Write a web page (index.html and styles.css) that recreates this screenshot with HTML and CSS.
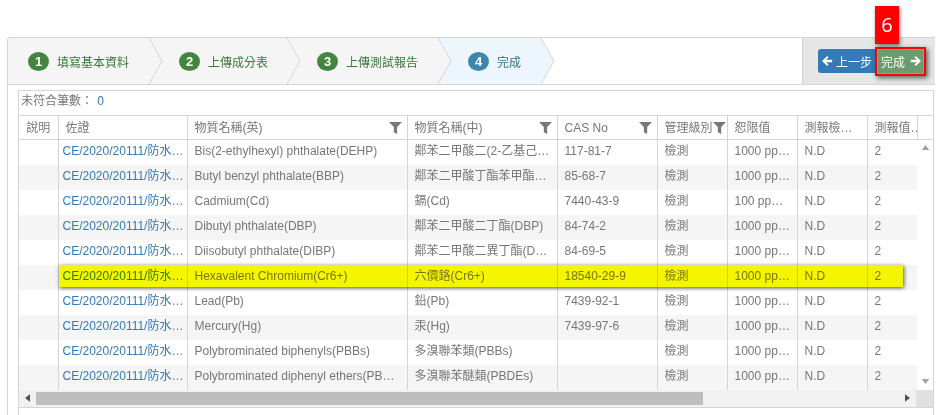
FILE: index.html
```html
<!DOCTYPE html>
<html lang="zh-Hant">
<head>
    <meta charset="UTF-8">
    <title>完成</title>
    <link rel="stylesheet" href="styles.css">
</head>
<body>
    <div class="panel">
        <div class="wizard">
            <div class="steps">
                <div class="step step-first"><span class="step-num">1</span><span class="step-text">填寫基本資料</span></div>
                <svg class="step-arrow" viewBox="0 0 14 46"><rect width="14" height="46" fill="#f5f5f5"/><path d="M0 0L13 23L0 46" fill="#f5f5f5" stroke="#d5d5d5"/></svg>
                <div class="step step-second"><span class="step-num">2</span><span class="step-text">上傳成分表</span></div>
                <svg class="step-arrow" viewBox="0 0 14 46"><rect width="14" height="46" fill="#f5f5f5"/><path d="M0 0L13 23L0 46" fill="#f5f5f5" stroke="#d5d5d5"/></svg>
                <div class="step"><span class="step-num">3</span><span class="step-text">上傳測試報告</span></div>
                <svg class="step-arrow" viewBox="0 0 14 46"><rect width="14" height="46" fill="#edf6fc"/><path d="M0 0L13 23L0 46" fill="#f5f5f5" stroke="#d5d5d5"/></svg>
                <div class="step step-current"><span class="step-num">4</span><span class="step-text">完成</span></div>
                <svg class="step-arrow" viewBox="0 0 14 46"><rect width="14" height="46" fill="#fff"/><path d="M0 0L13 23L0 46" fill="#edf6fc" stroke="#d5d5d5"/></svg>
            </div>
            <div class="actions">
                <a class="btn btn-prev">
                    <svg class="btn-icon" viewBox="0 0 12 12"><path d="M6.2 1L1 6L6.2 11L7.6 9.6L5 7.2H11.2V4.8H5L7.6 2.4Z" fill="#fff"/></svg>
                    上一步
                </a>
                <a class="btn btn-next">
                    完成
                    <svg class="btn-icon" viewBox="0 0 12 12"><path d="M5.8 1L11 6L5.8 11L4.4 9.6L7 7.2H0.8V4.8H7L4.4 2.4Z" fill="#fff"/></svg>
                </a>
                <div class="marker">6</div>
            </div>
        </div>

        <div class="grid">
            <div class="grid-summary">未符合筆數： <span class="summary-count">0</span></div>
            <div class="grid-body">
                <div class="grid-clip">
                    <table class="grid-table">
                        <colgroup>
                            <col class="col-note"><col class="col-doc"><col class="col-en"><col class="col-zh"><col class="col-cas"><col class="col-level"><col class="col-limit"><col class="col-result"><col class="col-value">
                        </colgroup>
                        <thead>
                            <tr>
                                <th class="center">說明</th>
                                <th>佐證</th>
                                <th>物質名稱(英)<svg class="filter" viewBox="0 0 14 13"><path d="M0 0H14L8.8 5.5V13L5.2 11V5.5Z"/></svg></th>
                                <th>物質名稱(中)<svg class="filter" viewBox="0 0 14 13"><path d="M0 0H14L8.8 5.5V13L5.2 11V5.5Z"/></svg></th>
                                <th>CAS No<svg class="filter" viewBox="0 0 14 13"><path d="M0 0H14L8.8 5.5V13L5.2 11V5.5Z"/></svg></th>
                                <th>管理級別<svg class="filter filter-tight" viewBox="0 0 14 13"><path d="M0 0H14L8.8 5.5V13L5.2 11V5.5Z"/></svg></th>
                                <th>恕限值</th>
                                <th>測報檢出值</th>
                                <th>測報值單位</th>
                            </tr>
                        </thead>
                        <tbody>
                            <tr><td></td><td class="doc"><a>CE/2020/20111/防水布料.pdf</a></td><td>Bis(2-ethylhexyl) phthalate(DEHP)</td><td class="zh">鄰苯二甲酸二(2-乙基己基)酯(DEHP)</td><td>117-81-7</td><td>檢測</td><td>1000 ppm(mg/kg)</td><td>N.D</td><td>2</td></tr>
                            <tr><td></td><td class="doc"><a>CE/2020/20111/防水布料.pdf</a></td><td>Butyl benzyl phthalate(BBP)</td><td class="zh">鄰苯二甲酸丁酯苯甲酯(BBP)</td><td>85-68-7</td><td>檢測</td><td>1000 ppm(mg/kg)</td><td>N.D</td><td>2</td></tr>
                            <tr><td></td><td class="doc"><a>CE/2020/20111/防水布料.pdf</a></td><td>Cadmium(Cd)</td><td class="zh">鎘(Cd)</td><td>7440-43-9</td><td>檢測</td><td>100 ppm(mg/kg)</td><td>N.D</td><td>2</td></tr>
                            <tr><td></td><td class="doc"><a>CE/2020/20111/防水布料.pdf</a></td><td>Dibutyl phthalate(DBP)</td><td class="zh">鄰苯二甲酸二丁酯(DBP)</td><td>84-74-2</td><td>檢測</td><td>1000 ppm(mg/kg)</td><td>N.D</td><td>2</td></tr>
                            <tr><td></td><td class="doc"><a>CE/2020/20111/防水布料.pdf</a></td><td>Diisobutyl phthalate(DIBP)</td><td class="zh">鄰苯二甲酸二異丁酯(DIBP)</td><td>84-69-5</td><td>檢測</td><td>1000 ppm(mg/kg)</td><td>N.D</td><td>2</td></tr>
                            <tr><td></td><td class="doc"><a>CE/2020/20111/防水布料.pdf</a></td><td>Hexavalent Chromium(Cr6+)</td><td class="zh">六價鉻(Cr6+)</td><td>18540-29-9</td><td>檢測</td><td>1000 ppm(mg/kg)</td><td>N.D</td><td>2</td></tr>
                            <tr><td></td><td class="doc"><a>CE/2020/20111/防水布料.pdf</a></td><td>Lead(Pb)</td><td class="zh">鉛(Pb)</td><td>7439-92-1</td><td>檢測</td><td>1000 ppm(mg/kg)</td><td>N.D</td><td>2</td></tr>
                            <tr><td></td><td class="doc"><a>CE/2020/20111/防水布料.pdf</a></td><td>Mercury(Hg)</td><td class="zh">汞(Hg)</td><td>7439-97-6</td><td>檢測</td><td>1000 ppm(mg/kg)</td><td>N.D</td><td>2</td></tr>
                            <tr><td></td><td class="doc"><a>CE/2020/20111/防水布料.pdf</a></td><td>Polybrominated biphenyls(PBBs)</td><td class="zh">多溴聯苯類(PBBs)</td><td></td><td>檢測</td><td>1000 ppm(mg/kg)</td><td>N.D</td><td>2</td></tr>
                            <tr><td></td><td class="doc"><a>CE/2020/20111/防水布料.pdf</a></td><td>Polybrominated diphenyl ethers(PBDEs)</td><td class="zh">多溴聯苯醚類(PBDEs)</td><td></td><td>檢測</td><td>1000 ppm(mg/kg)</td><td>N.D</td><td>2</td></tr>
                        </tbody>
                    </table>
                </div>
                <div class="vscroll">
                    <div class="vscroll-head"></div>
                    <svg class="vscroll-arrow" viewBox="0 0 9 6"><path d="M4.5 0L9 6H0Z"/></svg>
                    <svg class="vscroll-arrow vscroll-down" viewBox="0 0 9 6"><path d="M4.5 6L9 0H0Z"/></svg>
                </div>
                <div class="row-highlight"></div>
            </div>
            <div class="hscroll">
                <svg class="hscroll-arrow" viewBox="0 0 6 9"><path d="M0 4.5L6 0V9Z"/></svg>
                <div class="hscroll-track"><div class="hscroll-thumb"></div></div>
                <svg class="hscroll-arrow" viewBox="0 0 6 9"><path d="M6 4.5L0 0V9Z"/></svg>
                <div class="hscroll-corner"></div>
            </div>
            <div class="grid-footer"></div>
        </div>
    </div>
</body>
</html>
```

FILE: styles.css
```css
body, html {
    margin: 0;
    padding: 0;
    height: 100%;
    overflow: hidden;
    background-color: #fff;
    font-family: "Liberation Sans", "Noto Sans CJK TC", sans-serif;
    font-size: 12px;
    color: #777;
}
body {
    padding-top: 37px;
    box-sizing: border-box;
}
.panel {
    box-sizing: border-box;
    width: 928px;
    height: 378px;
    margin-left: 7px;
    border: 1px solid #d5d5d5;
    border-right: 0;
    border-bottom: 0;
    border-radius: 4px 0 0 0;
}

/* wizard header */
.wizard {
    display: flex;
    justify-content: space-between;
    height: 46px;
    border-bottom: 1px solid #d5d5d5;
}
.steps {
    display: flex;
}
.step {
    display: flex;
    align-items: center;
    padding: 0 20px 0 16px;
    background-color: #f5f5f5;
    color: #3c763d;
}
.step-first {
    padding-left: 20px;
    border-radius: 4px 0 0 0;
}
.step-second {
    padding-right: 19px;
}
.step-current {
    background-color: #edf6fc;
    color: #31708f;
}
.step-num {
    width: 21px;
    height: 19px;
    margin-right: 8px;
    border-radius: 50%;
    background-color: #43853f;
    color: #fff;
    font-size: 13px;
    font-weight: bold;
    line-height: 19px;
    text-align: center;
}
.step-current .step-num {
    background-color: #3c87ae;
}
.step-arrow {
    display: block;
    width: 14px;
    height: 46px;
}
.actions {
    position: relative;
    display: flex;
    align-items: center;
    width: 117px;
    padding-left: 15px;
    background-color: #e6e6e6;
    border-left: 1px solid #d5d5d5;
}
.btn {
    display: flex;
    align-items: center;
    box-sizing: border-box;
    color: #fff;
    font-size: 12px;
}
.btn-prev {
    gap: 3px;
    width: 57px;
    height: 24px;
    padding-left: 3px;
    background-color: #337ab7;
    border-radius: 3px 0 0 3px;
}
.btn-next {
    gap: 5px;
    width: 51px;
    height: 29px;
    padding-left: 4px;
    background-color: #6c9b6c;
    border: 2px solid #f00;
    box-shadow: 2px 2px 5px rgba(0, 0, 0, 0.6), inset 0 0 0 1px #8aa68a;
}
.btn-icon {
    width: 12px;
    height: 12px;
}
.marker {
    position: absolute;
    left: 72px;
    top: -32px;
    width: 24px;
    height: 38px;
    background-color: #f00;
    color: #fff;
    font-family: "Open Sans", sans-serif;
    font-size: 20px;
    line-height: 38px;
    text-align: center;
    box-shadow: 1px 2px 4px rgba(0, 0, 0, 0.5);
}

/* data grid */
.grid {
    margin: 5px 0 0 10px;
    border: 1px solid #d5d5d5;
    border-bottom: 0;
    width: 914px;
}
.grid-summary {
    height: 24px;
    padding: 0 2px;
    box-sizing: border-box;
    line-height: 20px;
    white-space: nowrap;
}
.summary-count {
    color: #337ab7;
    margin-left: 1px;
}
.grid-body {
    position: relative;
    display: flex;
}
.grid-clip {
    flex: none;
    width: 898px;
    overflow: hidden;
}
.grid-table {
    table-layout: fixed;
    border-collapse: collapse;
    width: 918px;
}
.col-note { width: 39px; }
.col-doc { width: 129px; }
.col-en { width: 220px; }
.col-zh { width: 150px; }
.col-cas { width: 100px; }
.col-level { width: 70px; }
.col-limit { width: 70px; }
.col-result { width: 70px; }
.col-value { width: 70px; }
.grid-table th {
    position: relative;
    box-sizing: border-box;
    height: 24px;
    padding: 0 5px 0 7px;
    font-weight: normal;
    line-height: 16px;
    text-align: left;
    border-top: 1px solid #d5d5d5;
    border-bottom: 1px solid #d5d5d5;
    border-left: 1px solid #d5d5d5;
    overflow: hidden;
    white-space: nowrap;
    text-overflow: ellipsis;
}
.grid-table th:first-child {
    border-left: 0;
    padding: 0;
}
.grid-table .center {
    text-align: center;
}
.grid-table td {
    box-sizing: border-box;
    height: 25px;
    padding: 0 5px 2px 7px;
    line-height: 16px;
    border-left: 1px solid #d5d5d5;
    overflow: hidden;
    white-space: nowrap;
    text-overflow: ellipsis;
}
.grid-table td:first-child {
    border-left: 0;
}
.grid-table tbody tr:nth-child(even) {
    background-color: #f5f5f5;
}
.grid-table .doc {
    padding: 0 2px 2px 4px;
}
.grid-table .zh {
    padding-right: 7px;
}
.doc a {
    color: #337ab7;
}
.filter {
    position: absolute;
    right: 5px;
    top: 6px;
    width: 13px;
    height: 12px;
    fill: #777;
}
.filter-tight {
    right: 1px;
}
.vscroll {
    display: flex;
    flex-direction: column;
    align-items: center;
    box-sizing: border-box;
    width: 16px;
    padding-bottom: 6px;
}
.vscroll-head {
    box-sizing: border-box;
    align-self: stretch;
    height: 25px;
    margin-bottom: 5px;
    border: 1px solid #d5d5d5;
    border-right: 0;
}
.vscroll-arrow {
    width: 9px;
    height: 5px;
    fill: #a3a3a3;
}
.vscroll-down {
    margin-top: auto;
}

/* lies over the sixth row, the text shows through */
.row-highlight {
    position: absolute;
    left: 40px;
    top: 150px;
    width: 844px;
    height: 22px;
    background-color: #ff0;
    mix-blend-mode: multiply;
    box-shadow: 1px 1px 4px rgba(0, 0, 0, 0.65);
}

.hscroll {
    display: flex;
    align-items: center;
    height: 17px;
    background-color: #f1f1f1;
}
.hscroll-arrow {
    flex: none;
    width: 5px;
    height: 8px;
    fill: #505050;
}
.hscroll-arrow:first-child {
    margin: 0 6px 0 6px;
}
.hscroll-arrow:nth-child(3) {
    margin: 0 6px 0 4px;
}
.hscroll-track {
    flex: 1;
    height: 13px;
}
.hscroll-thumb {
    width: 667px;
    height: 13px;
    background-color: #bebebe;
}
.hscroll-corner {
    flex: none;
    width: 17px;
    height: 17px;
    background-color: #e0e0e0;
}
.grid-footer {
    height: 7px;
    border-top: 1px solid #d5d5d5;
}
```
